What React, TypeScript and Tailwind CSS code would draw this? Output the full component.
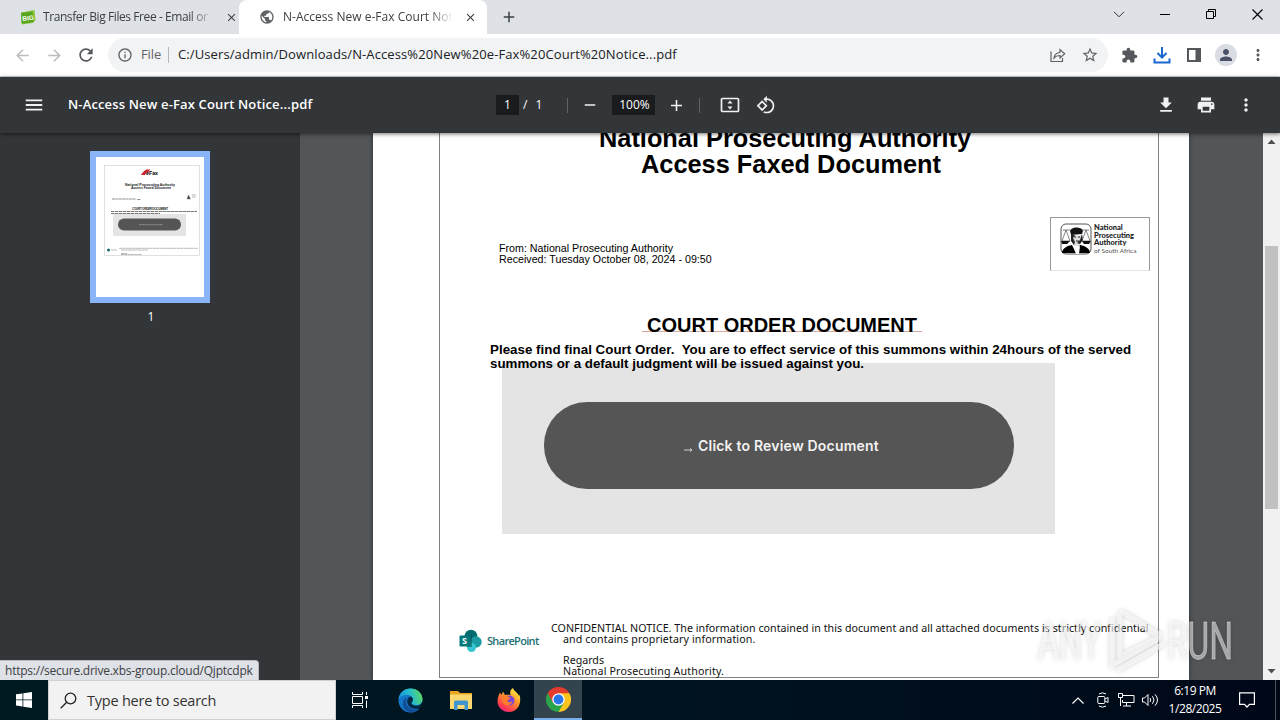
import React from "react";
import {
  MdAdd, MdArrowBack, MdArrowForward, MdClose, MdExtension, MdFileDownload, MdMenu, MdMoreVert,
  MdOutlineInfo, MdPrint, MdPublic, MdRefresh, MdRemove, MdRotate90DegreesCcw, MdPerson, MdStarBorder,
} from "react-icons/md";

function BigLogo() {
  return (
    <svg width="16" height="15" viewBox="0 0 16 15" className="shrink-0">
      <path d="M1 2.5 14.5 0l1 10L13 13l-11 1.500L1 12z" fill="#8cc63f" />
      <path d="M1 3 12.500 1.500l1.200 10.500L2.200 13.800z" fill="#58a51f" />
      <text x="2.300" y="10.500" fontSize="6.500" fontWeight="bold" fontFamily="Liberation Sans, sans-serif" fill="#fff" transform="rotate(-6 7 8)">BIG</text>
    </svg>
  );
}

function TabStrip() {
  return (
    <div className="flex h-[34px] shrink-0 bg-[#dee1e6] text-[12px] text-[#3c4043]">
      <div className="flex w-[239px] shrink-0 items-center pl-5">
        <BigLogo />
        <span className="ml-[7px] w-[170px] shrink-0 overflow-hidden whitespace-nowrap tracking-[-0.42px] [mask-image:linear-gradient(90deg,#000_86%,transparent_101%)]">Transfer Big Files Free - Email or</span>
        <MdClose size={13} className="ml-[12px] shrink-0 text-[#3c4043]" />
      </div>
      <div className="flex w-[248px] shrink-0 items-center rounded-t-lg bg-white pl-[20px]">
        <MdPublic size={16} className="shrink-0 text-[#5f6368]" />
        <span className="ml-[8px] w-[170px] shrink-0 overflow-hidden whitespace-nowrap tracking-[0.02px] [mask-image:linear-gradient(90deg,#000_86%,transparent_100%)]">N-Access New e-Fax Court Notice</span>
        <MdClose size={13} className="ml-[11px] shrink-0 text-[#3c4043]" />
      </div>
      <div className="flex flex-1 items-center pl-[13px]">
        <MdAdd size={18} className="text-[#3c4043]" />
      </div>
      <div className="flex items-center text-black">
        <svg width="12" height="7" viewBox="0 0 12 7" className="mr-[35px] -mt-[6px]" fill="none" stroke="#333"><path d="m1 .8 5 5 5-5" /></svg>
        <svg width="10" height="10" viewBox="0 0 10 10" className="mr-[36px] -mt-[6px]"><path d="M0 5.500h10" stroke="#000" /></svg>
        <svg width="11" height="11" viewBox="0 0 11 11" className="mr-[35px] -mt-[6px]" fill="none" stroke="#000"><path d="M.5 2.500h7v7h-7zM2.500 2.500V.5h7v7h-2" /></svg>
        <svg width="11" height="11" viewBox="0 0 11 11" className="mr-[17px] -mt-[6px]" fill="none" stroke="#000" strokeWidth="1.100"><path d="m.5.5 10 10m0-10-10 10" /></svg>
      </div>
    </div>
  );
}

function AddressBar() {
  return (
    <div className="flex h-[43px] shrink-0 items-center border-b border-[#d5d7da] bg-white pl-[13px]">
      <MdArrowBack size={19} className="text-[#bbbdc0]" />
      <MdArrowForward size={19} className="ml-[13px] text-[#bbbdc0]" />
      <MdRefresh size={20} className="ml-[12px] text-[#54585d]" />
      <div className="ml-3 flex h-[34px] w-[1000px] items-center rounded-full bg-[#f1f3f4] pl-[9px] pr-[9px] text-[14px]">
        <MdOutlineInfo size={16} className="text-[#5f6368]" />
        <span className="ml-[8px] w-[21px] whitespace-nowrap text-[13px] tracking-[-0.1px] text-[#5f6368]">File</span>
        <span className="ml-[6px] h-4 w-px bg-[#b4b7bb]" />
        <span className="ml-[9px] flex-1 whitespace-nowrap text-[13px] tracking-[0.110px] text-[#202124]">C:/Users/admin/Downloads/N-Access%20New%20e-Fax%20Court%20Notice...pdf</span>
        <svg width="16" height="15" viewBox="0 0 16 15" fill="none" stroke="#5f6368" strokeWidth="1.200" className="mr-[15px]">
          <path d="M1 3.500v10h11.500v-3.500" /><path d="M4 10c.5-3.800 2.700-5.300 6-5.500V1.500l4.700 4.300-4.700 4.200V7.500C7.300 7.400 5.600 8.200 4 10z" />
        </svg>
        <MdStarBorder size={18} className="text-[#5f6368]" />
      </div>
      <MdExtension size={17} className="ml-[13px] text-[#54585d]" />
      <svg width="18" height="17" viewBox="0 0 18 17" fill="none" stroke="#1a67d2" strokeWidth="2" className="ml-[15px]">
        <path d="M9 0v10M4.500 6 9 10.500 13.500 6M1.500 11.500V15.500h15V11.500" />
      </svg>
      <svg width="14" height="14" viewBox="0 0 14 14" className="ml-[16px]"><path d="M0 0h14v14H0zM2 2v10h6.500V2z" fillRule="evenodd" fill="#54585d" /></svg>
      <span className="ml-[14px] flex size-[22px] items-center justify-center rounded-full bg-[#dadce3]"><MdPerson size={18} className="text-[#4a5166]" /></span>
      <MdMoreVert size={18} className="ml-[12px] text-[#54585d]" />
    </div>
  );
}

function PdfToolbar() {
  return (
    <div className="relative z-10 flex h-14 shrink-0 items-center bg-[#323639] text-white shadow-[0_1px_4px_rgba(0,0,0,0.55)]">
      <MdMenu size={22} className="ml-[23px] text-[#f1f1f1]" />
      <span className="ml-[23px] w-[428px] whitespace-nowrap text-[13px] font-semibold tracking-[0.150px]">N-Access New e-Fax Court Notice...pdf</span>
      <span className="flex h-5 w-[23px] items-center justify-center bg-[#191b1c] text-[12px]">1</span>
      <span className="ml-[4px] w-[44px] whitespace-pre pr-1 text-[12px] tracking-[0.6px]">/  1</span>
      <span className="h-[15px] w-px bg-[#606366]" />
      <MdRemove size={18} className="ml-[13px] text-[#f1f1f1]" />
      <span className="ml-[13px] flex h-5 w-[43px] items-center justify-center bg-[#191b1c] pl-[2px] text-[12px]">100%</span>
      <MdAdd size={19} className="ml-[12px] text-[#f1f1f1]" />
      <span className="ml-[13px] h-[15px] w-px bg-[#606366]" />
      <svg width="20" height="16" viewBox="0 0 20 16" className="ml-[20px]">
        <rect x="1.500" y="1.500" width="17" height="13" rx="1" fill="none" stroke="#f1f1f1" strokeWidth="1.700" />
        <path d="m10 3.500 2.500 3h-5zM10 12.500l2.500-3h-5z" fill="#f1f1f1" />
      </svg>
      <MdRotate90DegreesCcw size={20} className="ml-[16px] text-[#f1f1f1]" />
      <div className="flex flex-1 items-center justify-end gap-5 pr-6 text-[#f1f1f1]">
        <MdFileDownload size={20} />
        <MdPrint size={20} />
        <MdMoreVert size={20} />
      </div>
    </div>
  );
}

function Thumbnail() {
  return (
    <div className="h-[152px] w-[120px] border-[6px] border-[#8ab4f8] bg-white">
      <svg width="108" height="140" viewBox="0 0 108 140" fontFamily="Liberation Sans, sans-serif">
        <rect x="8.500" y="8.500" width="95" height="90" fill="none" stroke="#ccc" strokeWidth=".6" />
        <path d="M45 18q3-5 7-6l-3 6zM50 15q2-3 4-3l-2 4z" fill="#c8202a" />
        <text x="50" y="17.500" fontSize="6" fontWeight="bold" textLength="12" lengthAdjust="spacingAndGlyphs">eFax</text>
        <g fontWeight="bold" fontSize="3.500" fill="#222">
          <text x="29" y="28.500" textLength="50">National Prosecuting Authority</text>
          <text x="35" y="31.500" textLength="40">Access Faxed Document</text>
          <text x="36" y="52.500" fontSize="3" textLength="36">COURT ORDER DOCUMENT</text>
        </g>
        <path d="M16 42h24m1 .5h4" stroke="#777" strokeWidth=".8" strokeDasharray="3 .4" />
        <path d="M91 42l1.500-4 2 4zM96 38h4m-4 2h3.500" fill="#333" stroke="#888" strokeWidth=".6" />
        <path d="M15 54.500h86M15 56.500h49" stroke="#555" strokeWidth=".8" strokeDasharray="3.500 .5" />
        <rect x="17" y="57" width="73" height="22" fill="#e4e4e4" />
        <rect x="22" y="61.500" width="63" height="12" rx="6" fill="#555" />
        <path d="M43 67.700h24" stroke="#999" strokeWidth=".8" strokeDasharray="2.500 .5" />
        <circle cx="12.500" cy="93" r="1.500" fill="#146a6c" />
        <path d="M15 93h6M23 91.300h79M25 93h27M25 96.500h6M25 97.500h21" stroke="#888" strokeWidth=".6" strokeDasharray="3 .4" />
      </svg>
    </div>
  );
}

function AuthorityLogo() {
  return (
    <div className="flex h-[54px] w-[100px] border border-b-[#e4e4e4] border-[#999] pl-[9px] pt-[5px]">
      <svg width="32" height="32" viewBox="0 0 32 32" className="shrink-0">
        <rect x="1" y="1" width="30" height="30" rx="5" fill="#fff" stroke="#555" />
        <path d="M10 8c1-4 11-5 13 0l-1 3-11 1z" fill="#111" />
        <path d="M12 11v6l2 6h5l3-6v-6l-3 2-3-1z" fill="#ddd" />
        <path d="M11 10v8l3 4 1-3-2-4 2-3zM22 11l-2 6-3 3 3 1 3-4z" fill="#222" />
        <path d="M14 14h2m2 0h2m-4 4h3" stroke="#222" />
        <path d="M2 30c0-4 4-7 10-8l4 8 4-8c6 1 10 4 10 8z" fill="#000" />
        <path d="m13 22 3 9h3l1-8-3 2z" fill="#fff" />
        <path d="M3 7h7m12 0h7M6 7l-4 11h8zM26 7l-4 11h8z" fill="none" stroke="#555" strokeWidth=".7" />
        <path d="M1 18h9l-3 3H2zM22 18h9l-2 3h-5z" fill="#111" />
      </svg>
      <div className="ml-[2px] mt-px whitespace-nowrap font-['Lato',sans-serif] text-[7.500px] font-black leading-[7.500px] text-[#222]">
        <div>National</div>
        <div>Prosecuting</div>
        <div>Authority</div>
        <div className="text-[6.500px] font-normal text-[#555]">of South Africa</div>
      </div>
    </div>
  );
}

function SharePointLogo() {
  return (
    <div className="flex h-6 items-center">
      <svg width="24" height="24" viewBox="0 0 24 24">
        <circle cx="12" cy="7" r="6.300" fill="#036c70" />
        <circle cx="17" cy="13" r="5.700" fill="#1a9ba1" />
        <circle cx="12.500" cy="18.500" r="4.500" fill="#37c6d0" />
        <path d="M8 6h5v12H8z" fill="#02494c" opacity=".5" />
        <rect x="0.500" y="6.500" width="11" height="11" rx="1" fill="#03787c" />
        <text x="3" y="15" fontSize="9" fontWeight="bold" fill="#fff" fontFamily="Open Sans, sans-serif">S</text>
      </svg>
      <span className="ml-[4px] font-['Open_Sans',sans-serif] text-[11px] font-semibold tracking-[-0.68px] text-[#1c6f73]">SharePoint</span>
    </div>
  );
}

function DocumentPage() {
  return (
    <div className="ml-[73px] h-[547px] w-[816px] shrink-0 bg-white pl-[66px] font-['Liberation_Sans',sans-serif] text-black shadow-[0_0_4px_rgba(0,0,0,0.5)]">
      <div className="flex h-[545px] w-[720px] flex-col border border-t-0 border-[#808080]">
        <div className="-mt-[8px] whitespace-nowrap text-[25.350px] font-bold leading-[26px]">
          <div className="pl-[159px]">National Prosecuting Authority</div>
          <div className="pl-[201px]">Access Faxed Document</div>
        </div>
        <div className="mt-[40px] flex h-[53px] justify-between pl-[59px] pr-[8px]">
          <div className="whitespace-nowrap pt-[26px] text-[10.700px] leading-[11px]">
            <div>From: National Prosecuting Authority</div>
            <div>Received: Tuesday October 08, 2024 - 09:50</div>
          </div>
          <AuthorityLogo />
        </div>
        <div className="ml-[202px] mt-[45px] h-[17px] w-[280px] border-b border-[#d9a9a0] pl-[5px]">
          <div className="whitespace-nowrap text-[20px] font-bold leading-[20px]">COURT ORDER DOCUMENT</div>
        </div>
        <div className="relative z-10 mt-[11px] whitespace-pre pl-[50px] text-[13.330px] font-bold leading-[14px]">
          <div className="tracking-[0.025px]">Please find final Court Order.  You are to effect service of this summons within 24hours of the served</div>
          <div>summons or a default judgment will be issued against you.</div>
        </div>
        <div className="-mt-[8px] ml-[62px] flex h-[171px] w-[553px] bg-[#e4e4e4] pl-[42px] pt-[39px]">
          <div className="flex h-[87px] w-[470px] items-center rounded-[43px] bg-[#555] pl-[139px] font-['Inter',sans-serif] text-[14px] font-semibold text-[#f2f2f2]">
            <svg width="11" height="6" viewBox="0 0 11 6" className="mt-[8px] mr-[4px]"><path d="M1 3h8M7 1.500l2 1.500-2 1.500" fill="none" stroke="#ddd" strokeWidth=".9" /></svg>
            <span className="whitespace-nowrap tracking-[0.200px]">Click to Review Document</span>
          </div>
        </div>
        <div className="mt-[89px] flex pl-[19px]">
          <div className="mt-[6px] w-[92px] shrink-0"><SharePointLogo /></div>
          <div className="whitespace-nowrap font-['Noto_Sans',sans-serif] text-[10.670px] leading-[11px] text-[#111]">
            <div className="tracking-[0.038px]">CONFIDENTIAL NOTICE. The information contained in this document and all attached documents is strictly confidential</div>
            <div className="pl-3 tracking-[0.100px]">and contains proprietary information.</div>
            <div className="pl-3 pt-[10px]">Regards</div>
            <div className="pl-3 tracking-[0.140px]">National Prosecuting Authority.</div>
          </div>
        </div>
      </div>
    </div>
  );
}

function ScrollBar() {
  return (
    <div className="flex w-[17px] shrink-0 flex-col items-center bg-[#f1f1f1]">
      <svg width="17" height="17" viewBox="0 0 17 17"><path d="m4.500 11 4-4.500 4 4.500z" fill="#505050" /></svg>
      <div className="mt-[96px] h-[263px] w-[13px] bg-[#c1c1c1]" />
      <svg width="17" height="17" viewBox="0 0 17 17" className="mt-auto"><path d="m4.500 6 4 4.500 4-4.500z" fill="#505050" /></svg>
    </div>
  );
}

function Watermark() {
  return (
    <svg width="204" height="70" viewBox="0 0 204 70" className="pointer-events-none absolute left-[1034px] top-[605px] z-20 [filter:drop-shadow(0_0_2px_rgba(0,0,0,0.28))]" fontFamily="Roboto, sans-serif" fontSize="51">
      <g fill="#fff" fillOpacity=".5" stroke="#fff" strokeOpacity=".4" strokeWidth=".8">
        <text x="4" y="54" textLength="63" lengthAdjust="spacingAndGlyphs">ANY</text>
        <text x="133" y="54" textLength="66" lengthAdjust="spacingAndGlyphs">RUN</text>
      </g>
      <path d="M86 8v43l39-19L88 7l40 24M78 13v50M84 65l47-27M80 59l44-25" fill="none" stroke="#fff" strokeOpacity=".62" strokeWidth="5" strokeLinejoin="round" />
    </svg>
  );
}

function EdgeIcon() {
  return (
    <svg width="25" height="25" viewBox="0 0 25 25">
      <defs>
        <linearGradient id="eg" x1="0" x2="1" y1=".4" y2=".2"><stop stopColor="#1597dd" /><stop offset=".5" stopColor="#27bdc9" /><stop offset="1" stopColor="#62d957" /></linearGradient>
      </defs>
      <circle cx="12.500" cy="12.500" r="12" fill="#1476c8" />
      <path d="M9 9.500c-3 5 1 12 8 12 3 0 5-1.500 5.500-2-2 3.500-6 5-10 5C7 23 4 19 5 14c.5-2.500 2-4 4-4.500z" fill="#134f98" />
      <path d="M16 18c3 1.200 8-.5 8.500-6v6l-3 3-6-1z" fill="#001a22" />
      <path d="M.5 12C1 5 6 .5 12.500.5c7 0 12 5 12 10.500 0 4-3 6-6.500 6-3 0-4.500-1-4.500-2s1.500-1.500 1.500-3.500c0-2.500-2.500-4.500-6-4.500C5 7 1.500 9 .5 12z" fill="url(#eg)" />
      <path d="M13.500 15c0-1 1.500-1.500 1.500-3.500 0-1.500-1-2.500-2.500-3-3 1-4 4-3 7s4 5 7.500 5c3 0 5-1 6-2 1-1 .5-2-.5-1.500-4 1.500-9 .5-9-2z" fill="#062a44" />
    </svg>
  );
}

function ExplorerIcon() {
  return (
    <svg width="22" height="19" viewBox="0 0 22 19">
      <path d="M0 0h8l2 2h12v16H0z" fill="#e9a71f" />
      <path d="M0 3.500h22V18H0z" fill="#fcd970" />
      <path d="M4 19v-8q0-1.500 1.500-1.500h11Q18 9.500 18 11v8h-3.500v-5h-7v5z" fill="#3f95cf" />
    </svg>
  );
}

function FirefoxIcon() {
  return (
    <svg width="24" height="24" viewBox="0 0 24 24">
      <defs>
        <linearGradient id="fx" x1=".8" x2=".2" y1="0" y2="1"><stop stopColor="#fff24a" /><stop offset=".4" stopColor="#ff9a28" /><stop offset=".8" stopColor="#ff3b4f" /><stop offset="1" stopColor="#e3218d" /></linearGradient>
      </defs>
      <path d="M3 4.500 4.500 7 6 3.500 8 7c2-.5 4-.5 5.500 0-1-3 0-5.500 2.500-7 .5 3 5 4.500 6 8l.5-1.500C25 15 21 24 12 24 5 24 .5 19 .5 13 .5 9 2 7 3 4.500z" fill="url(#fx)" />
      <circle cx="12.500" cy="12.500" r="5" fill="#7a43dc" />
      <path d="M5 9c2-2 5-2 6.500 0l2 .5c0 2-3 1.500-3 3.500 1 2 4 1 5 0-1 5-8 6-10 1-1-2-.5-3.500-.5-5z" fill="#ff7d2b" />
    </svg>
  );
}

function ChromeIcon() {
  return (
    <svg width="25" height="25" viewBox="0 0 48 48">
      <path d="M24 24 3.200 12A24 24 0 0 1 44.800 12z" fill="#e33b2e" />
      <path d="M24 24 44.800 12A24 24 0 0 1 24 48z" fill="#fcc31e" />
      <path d="M24 24v24A24 24 0 0 1 3.200 12z" fill="#2ba24c" />
      <path d="M24 12h20.800L34.400 30z" fill="#fcc31e" />
      <path d="M34.400 30 24 48 13.600 30z" fill="#2ba24c" />
      <path d="M3.200 12 13.600 30 18 22z" fill="#2ba24c" />
      <path d="M3.200 12 13.600 30 24 12z" fill="#e33b2e" />
      <circle cx="24" cy="24" r="12" fill="#fff" />
      <circle cx="24" cy="24" r="9.500" fill="#2876ea" />
    </svg>
  );
}

function Taskbar() {
  return (
    <div className="relative z-30 flex h-10 shrink-0 items-center bg-gradient-to-r from-[#001a22] via-[#001420] to-[#000818] text-white">
      <div className="flex w-12 justify-center">
        <svg width="16" height="16" viewBox="0 0 16 16" fill="#fff"><path d="M0 2.300 6.500 1.400v6.100H0zM7.300 1.300 16 0v7.500H7.300zM0 8.300h6.500v6.200L0 13.600zM7.300 8.300H16V16l-8.700-1.300z" /></svg>
      </div>
      <div className="flex h-10 w-[288px] items-center border border-[#d0d0d0] bg-[#f2f2f2] pl-[11px] text-[#333]">
        <svg width="17" height="17" viewBox="0 0 17 17" fill="none" stroke="#222" strokeWidth="1.300"><circle cx="10.500" cy="6.500" r="5.300" /><path d="M6.700 10.300.7 16.300" /></svg>
        <span className="ml-[10px] whitespace-nowrap pt-[2px] text-[14.500px] tracking-[-0.220px]">Type here to search</span>
      </div>
      <div className="flex w-[48px] justify-center">
        <svg width="17" height="16" viewBox="0 0 17 16" fill="none" stroke="#fff"><path d="M.5 0v2.500h10V0M.5 4.500h10v7H.5zM.5 16v-2.500h10V16M14.500 0v3M14.500 8.500V16" /><path d="M13 4h3v3h-3z" fill="#fff" stroke="none" /></svg>
      </div>
      <div className="flex w-[53px] justify-center"><EdgeIcon /></div>
      <div className="flex w-[47px] justify-center"><ExplorerIcon /></div>
      <div className="flex w-[50px] justify-center"><FirefoxIcon /></div>
      <div className="flex h-10 w-12 items-center justify-center border-b-2 border-[#76b0ea] bg-[#33444e]"><ChromeIcon /></div>
      <div className="flex flex-1 items-center justify-end">
        <svg width="12" height="7" viewBox="0 0 12 7" fill="none" stroke="#fff" strokeWidth="1.200"><path d="m.5 6.500 5.500-5.500 5.500 5.500" /></svg>
        <svg width="12" height="16" viewBox="0 0 12 16" className="ml-[13px]" fill="none" stroke="#fff"><rect x=".8" y="4.500" width="7" height="7" rx="1" /><path d="m8 7 3-1.500v5L8 9M2 2Q5.500-.3 9 2M2 14q3.500 2.300 7 0" /></svg>
        <svg width="17" height="14" viewBox="0 0 17 14" className="ml-[9px]" fill="none" stroke="#fff"><path d="M5 2.500h11v7H4.500V7M8.500 10v3M5 13h8M.5.500h4v4h-4zM2.500 5v8" /></svg>
        <svg width="17" height="14" viewBox="0 0 17 14" className="ml-[7px]" fill="none" stroke="#fff"><path d="M.5 5h2l3.500-3.500v11L2.500 9h-2zM8 5q1.500 2 0 4M10.500 3.200q3 3.800 0 7.600M13 1.300q5 5.700 0 11.400" /></svg>
        <div className="ml-[7px] w-[58px] whitespace-nowrap text-center text-[12px] leading-[18px] tracking-[-0.450px]">
          <div>6:19 PM</div>
          <div>1/28/2025</div>
        </div>
        <svg width="16" height="16" viewBox="0 0 16 16" className="ml-[15px] mr-[20px]" fill="none" stroke="#fff" strokeWidth="1.200"><path d="M.6.8h14.800v11.500H10.500L8 15l-2.500-2.700H.6z" /></svg>
        <span className="mr-1 h-10 w-px bg-[#4c5460]" />
      </div>
    </div>
  );
}

export default function App() {
  return (
    <div className="relative flex h-[720px] w-[1280px] flex-col overflow-hidden bg-white font-['Open_Sans',sans-serif]">
      <TabStrip />
      <AddressBar />
      <PdfToolbar />
      <div className="flex h-[547px] overflow-hidden bg-[#525659]">
        <div className="flex w-[300px] shrink-0 flex-col items-center bg-[#323639] pt-[18px] text-[12px] text-white">
          <Thumbnail />
          <span className="mt-[5px] pl-[2px]">1</span>
        </div>
        <div className="flex flex-1 overflow-hidden"><DocumentPage /></div>
        <ScrollBar />
      </div>
      <div className="absolute left-0 top-[660px] z-20 flex h-5 w-[259px] items-center whitespace-nowrap rounded-tr border-r border-t border-[#b8bbc0] bg-[#dee1e6] pl-[5px] text-[12px] tracking-[-0.230px] text-[#3c4043]">https://secure.drive.xbs-group.cloud/Qjptcdpk</div>
      <Watermark />
      <Taskbar />
    </div>
  );
}
